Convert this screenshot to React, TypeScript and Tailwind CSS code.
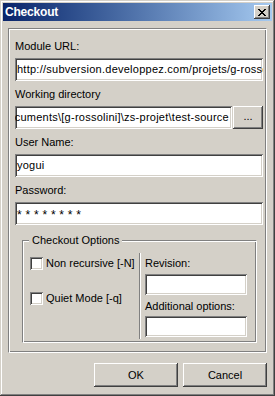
import React from "react";

const sunken =
  "bg-white shadow-[inset_1px_1px_0_#808080,inset_-1px_-1px_0_#ffffff,inset_2px_2px_0_#404040,inset_-2px_-2px_0_#d4d0c8]";
const raised =
  "bg-[#d4d0c8] shadow-[inset_-1px_-1px_0_#404040,inset_1px_1px_0_#ffffff,inset_-2px_-2px_0_#808080,inset_2px_2px_0_#d4d0c8]";
const etched =
  "border border-t-[#808080] border-l-[#808080] border-r-white border-b-white shadow-[inset_1px_1px_0_#ffffff,inset_-1px_-1px_0_#808080]";

function Label({ children, className = "" }: { children: React.ReactNode; className?: string }) {
  return <div className={"h-[13px] leading-[13px] whitespace-nowrap " + className}>{children}</div>;
}

function TextBox({ value, className = "", right = false, mono = false }: { value: string; className?: string; right?: boolean; mono?: boolean }) {
  return (
    <div className={sunken + " h-[23px] flex items-center overflow-hidden whitespace-nowrap pl-[2px] pr-[2px] " + (right ? "justify-end " : "") + className}>
      <span className={mono ? "tracking-[3.8px] text-[12px] leading-[13px] pt-[3px]" : "leading-[13px] tracking-[0.25px]"}>{value}</span>
    </div>
  );
}

function CheckBox({ label }: { label: string }) {
  return (
    <div className="flex items-center h-[13px]">
      <div className={sunken + " w-[13px] h-[13px] shrink-0"} />
      <span className="ml-[3px] leading-[13px] whitespace-nowrap">{label}</span>
    </div>
  );
}

export default function App() {
  return (
    <div className="w-[275px] h-[396px] bg-[#d4d0c8] p-[3px] flex flex-col text-[11px] text-black font-['Liberation_Sans',Arial,sans-serif] shadow-[inset_-1px_-1px_0_#404040,inset_1px_1px_0_#d4d0c8,inset_-2px_-2px_0_#808080,inset_2px_2px_0_#ffffff]">
      {/* Title bar */}
      <div className="h-[18px] flex items-center justify-between pl-[2px] pr-[2px] bg-gradient-to-r from-[#0a246a] to-[#a6caf0]">
        <span className="text-white font-bold text-[12px] tracking-[-0.2px] leading-[14px]">Checkout</span>
        <div className={raised + " w-[16px] h-[14px] flex items-center justify-center"}>
          <svg width="8" height="7" viewBox="0 0 8 7" shapeRendering="crispEdges">
            <g fill="#000">
              <rect x="0" y="0" width="2" height="1" />
              <rect x="6" y="0" width="2" height="1" />
              <rect x="1" y="1" width="2" height="1" />
              <rect x="5" y="1" width="2" height="1" />
              <rect x="2" y="2" width="4" height="1" />
              <rect x="3" y="3" width="2" height="1" />
              <rect x="2" y="4" width="4" height="1" />
              <rect x="1" y="5" width="2" height="1" />
              <rect x="5" y="5" width="2" height="1" />
              <rect x="0" y="6" width="2" height="1" />
              <rect x="6" y="6" width="2" height="1" />
            </g>
          </svg>
        </div>
      </div>

      {/* Main panel */}
      <div className={etched + " mt-[7px] ml-[5px] w-[259px] h-[325px] pt-[11px] pl-[6px] pr-[3px] flex flex-col"}>
        <Label className="mb-[5px]">Module URL:</Label>
        <TextBox value="http://subversion.developpez.com/projets/g-rossolini/zs-projet/trunk" />

        <Label className="mt-[7px] mb-[5px]">Working directory</Label>
        <div className="flex items-start gap-[1px]">
          <TextBox value="C:\Documents and Settings\yogui\My Documents\[g-rossolini]\zs-projet\test-source" right className="flex-1 min-w-0 pr-[3px]" />
          <div className={raised + " w-[30px] h-[23px] flex items-center justify-center shrink-0 pb-[2px]"}>...</div>
        </div>

        <Label className="mt-[7px] mb-[5px]">User Name:</Label>
        <TextBox value="yogui" />

        <Label className="mt-[7px] mb-[5px]">Password:</Label>
        <TextBox value="********" mono />

        {/* Checkout Options group */}
        <div className={etched + " relative mt-[15px] ml-[7px] w-[235px] h-[103px] flex"}>
          <span className="absolute -top-[7px] left-[6px] px-[3px] bg-[#d4d0c8] leading-[13px] whitespace-nowrap">Checkout Options</span>
          <div className="w-[116px] pl-[7px] pt-[16px] flex flex-col gap-[22px]">
            <CheckBox label="Non recursive [-N]" />
            <CheckBox label="Quiet Mode [-q]" />
          </div>
          <div className="mt-[12px] h-[86px] w-[2px] border-l border-l-[#808080] border-r border-r-white" />
          <div className="pl-[4px] pt-[16px] flex flex-col">
            <Label className="mb-[4px]">Revision:</Label>
            <div className={sunken + " w-[102px] h-[21px]"} />
            <Label className="mt-[5px] mb-[3px]">Additional options:</Label>
            <div className={sunken + " w-[102px] h-[21px]"} />
          </div>
        </div>
      </div>

      {/* Buttons */}
      <div className="mt-[10px] mr-[5px] flex justify-end gap-[5px]">
        <div className={raised + " w-[84px] h-[24px] flex items-center justify-center"}>OK</div>
        <div className={raised + " w-[84px] h-[24px] flex items-center justify-center"}>Cancel</div>
      </div>
    </div>
  );
}
